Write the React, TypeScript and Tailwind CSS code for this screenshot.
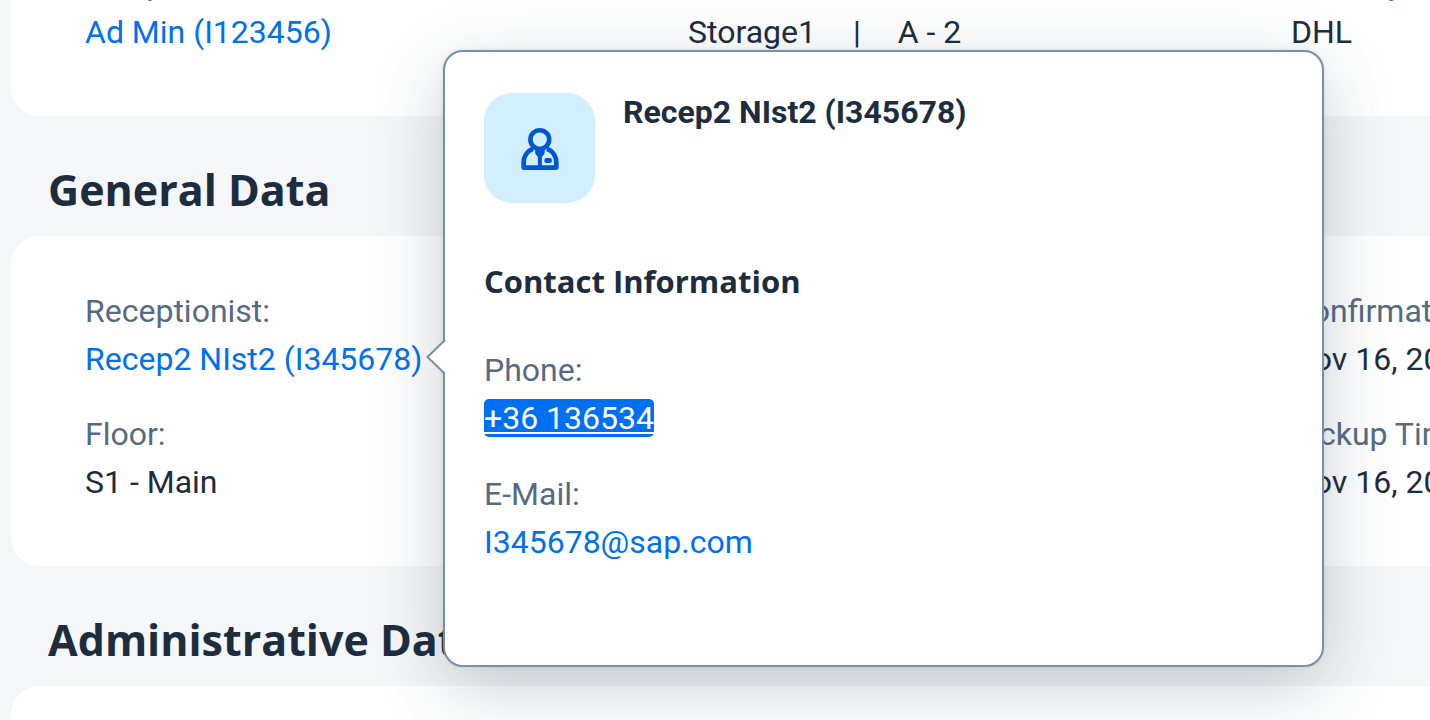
import type { ReactNode } from "react";

const bodyFont = "font-['Roboto','Liberation_Sans',sans-serif]";
const headingFont = "font-['Open_Sans','Noto_Sans',sans-serif]";

function Field({ label, children }: { label: string; children: ReactNode }) {
  return (
    <div className="whitespace-nowrap">
      <dt className="text-[#556b82]">{label}</dt>
      <dd className="text-[#1d2d3e]">{children}</dd>
    </div>
  );
}

function Card({ children }: { children: ReactNode }) {
  return (
    <dl className="grid grid-flow-row grid-cols-[603px_603px_603px] gap-y-[27px] overflow-hidden rounded-l-[28px] bg-white pt-[51px] pb-[60px] pl-[74px]">
      {children}
    </dl>
  );
}

function SectionTitle({ children }: { children: ReactNode }) {
  return (
    <h2 className={`${headingFont} flex h-[120px] items-center pt-7 pl-[37px] text-[43px] font-bold whitespace-nowrap text-[#1d2d3e]`}>
      {children}
    </h2>
  );
}

function PersonIcon() {
  return (
    <svg width="38" height="46" viewBox="0 -2 38 46" fill="none" stroke="#0057d2" aria-hidden="true">
      <circle cx="18.8" cy="12.6" r="9.4" strokeWidth="4.6" />
      <path d="M12 21.8C6 24 2.7 29.5 2.7 35.5V40.6H35.3V35.5C35.3 29.5 32 24 26 21.8" strokeWidth="4.8" strokeLinejoin="round" />
      <path d="M14 22H24L23.4 27L20.9 30V40H16.9V30L14.4 27Z" fill="#0057d2" stroke="none" />
      <rect x="23.4" y="31" width="7.4" height="5" rx="1.8" fill="#0057d2" stroke="none" />
    </svg>
  );
}

function ContactPopover() {
  return (
    <aside
      role="dialog"
      aria-labelledby="contact-name"
      className="absolute top-[50px] left-[443px] w-[881px] rounded-[20px] border-2 border-[#788fa6] bg-white px-[39px] pt-[41px] pb-[99px] shadow-[0_20px_70px_rgba(34,53,72,0.24),0_0_4px_rgba(34,53,72,0.1)]"
    >
      <svg className="absolute top-[287px] -left-[19px]" width="20" height="36" viewBox="0 0 20 36" aria-hidden="true">
        <path d="M20 1L2 18L20 35Z" fill="white" />
        <path d="M19 1L1.5 18L19 35" fill="none" stroke="#788fa6" strokeWidth="2" />
      </svg>
      <header className="flex gap-7">
        <div className="flex h-[110px] w-[111px] items-center justify-center rounded-[28px] bg-[#d1efff]">
          <PersonIcon />
        </div>
        <h3 id="contact-name" className="leading-[38px] font-bold text-[#1d2d3e]">
          Recep2 NIst2 (I345678)
        </h3>
      </header>
      <h4 className={`${headingFont} mt-[54px] text-[31px] font-bold text-[#1d2d3e]`}>Contact Information</h4>
      <dl className="mt-[41px] flex flex-col gap-7">
        <Field label="Phone:">
          <a href="tel:+36136534" className="rounded-[5px] bg-[#0070f2] text-white underline decoration-2 underline-offset-[3px] [text-decoration-skip-ink:none]">
            +36 136534
          </a>
        </Field>
        <Field label="E-Mail:">
          <a href="mailto:I345678@sap.com" className="text-[#0070f2]">
            I345678@sap.com
          </a>
        </Field>
      </dl>
    </aside>
  );
}

export default function App() {
  return (
    <div className={`${bodyFont} relative h-screen overflow-hidden bg-[#f5f6f7] text-[32px] leading-[48px]`}>
      <main className="-mt-[91px] pl-[11px]">
        <Card>
          <Field label="Recipient:">
            <a href="#admin" className="text-[#0070f2]">
              Ad Min (I123456)
            </a>
          </Field>
          <Field label="Location:">
            <span className="flex gap-[37px]">
              <span>Storage1</span>
              <span>|</span>
              <span>A - 2</span>
            </span>
          </Field>
          <Field label="Delivery:">DHL</Field>
        </Card>

        <SectionTitle>General Data</SectionTitle>
        <Card>
          <Field label="Receptionist:">
            <a href="#receptionist" className="text-[#0070f2]">
              Recep2 NIst2 (I345678)
            </a>
          </Field>
          <div />
          <Field label="Confirmation Time:">Nov 16, 2022</Field>
          <Field label="Floor:">S1 - Main</Field>
          <div />
          <Field label="Pickup Time:">Nov 16, 2022</Field>
        </Card>

        <SectionTitle>Administrative Data</SectionTitle>
        <Card>
          <Field label="Created By:">Ad Min</Field>
        </Card>
      </main>
      <ContactPopover />
    </div>
  );
}
